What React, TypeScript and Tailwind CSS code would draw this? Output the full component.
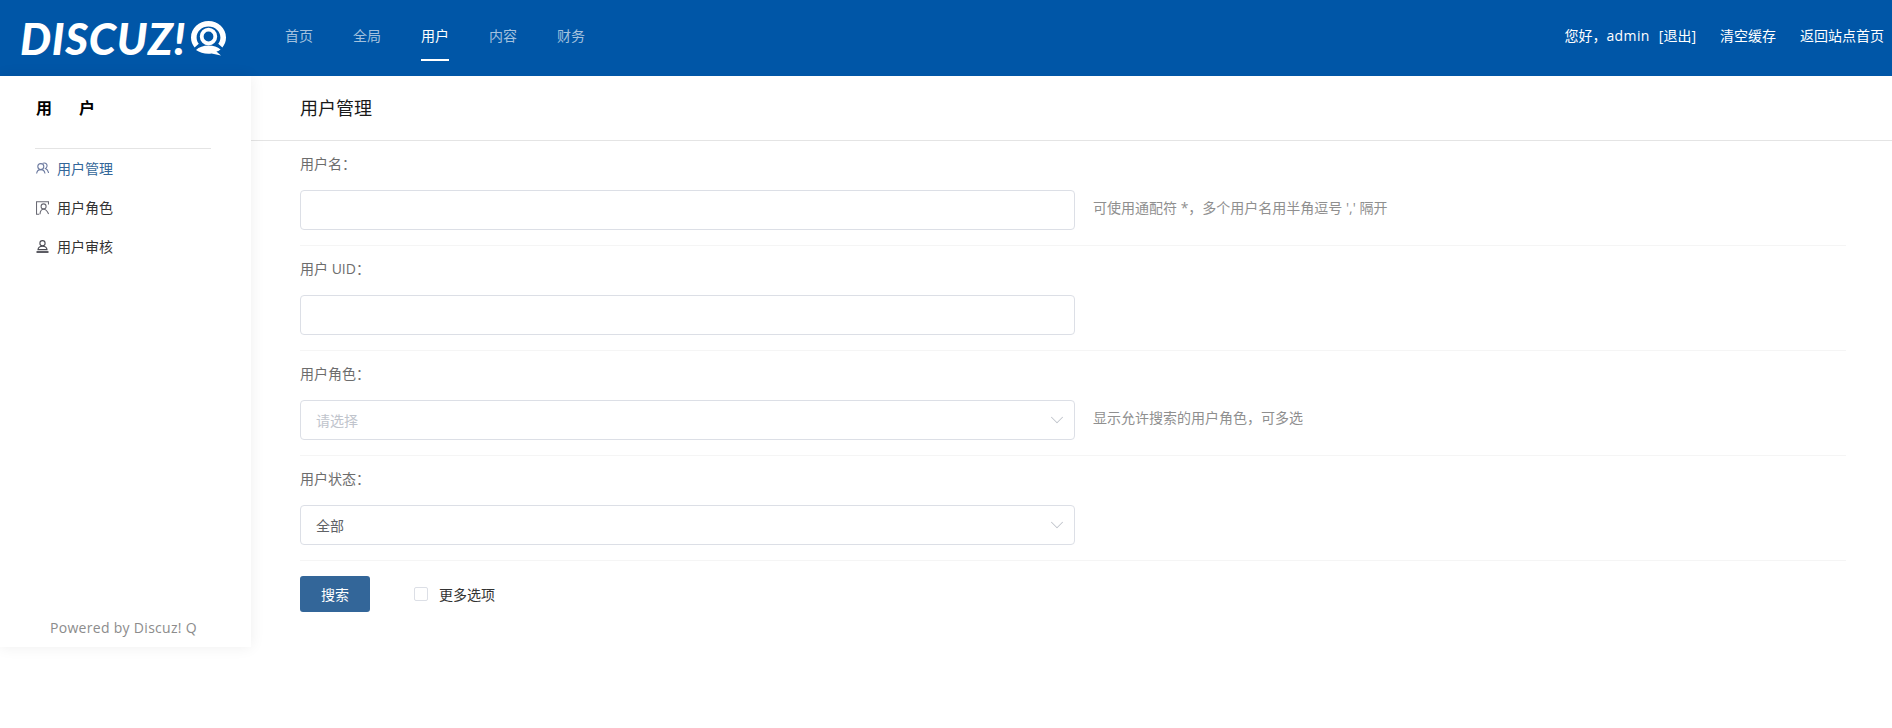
import React from 'react';
import { ChevronDown } from 'lucide-react';

const fontStack = "font-['Open_Sans','Noto_Sans_CJK_SC',sans-serif]";

const navItems = ['首页', '全局', '用户', '内容', '财务'];

const UsersIcon = () => (
  <svg width="13" height="13" viewBox="0 0 13 13" fill="none" stroke="#6d7ba0" strokeWidth="1.1">
    <circle cx="4.8" cy="4.6" r="3" />
    <path d="M0.6 11.5 C1 8.8 2.6 7.6 4.8 7.6 C7 7.6 8.6 8.8 9 11.5" />
    <path d="M6.6 1.4 C7 1.1 7.6 1 8.2 1 C10 1 11.3 2.4 11 4.2 C10.9 5.2 10.2 6 9.4 6.6 C11 7.2 12.2 8.8 12.6 11" />
  </svg>
);

const RoleIcon = () => (
  <svg width="13" height="14" viewBox="0 0 13 14" fill="none" stroke="#6a6a74" strokeWidth="1.1">
    <path d="M12.5 3.6 V0.8 H0.5 V13.2 H3.2" />
    <circle cx="7.6" cy="5.4" r="2.5" />
    <path d="M4 13.2 C4.2 10.2 5.6 8.2 7.6 8.2 C9.6 8.2 11.4 10.2 12.6 13" />
  </svg>
);

const AuditIcon = () => (
  <svg width="13" height="13" viewBox="0 0 13 13" fill="none" stroke="#4a4a52" strokeWidth="1.1">
    <circle cx="6.5" cy="3.2" r="2.6" />
    <path d="M2 9.6 C2.2 7.4 4 6.2 6.5 6.2 C9 6.2 10.8 7.4 11 9.6 Z" />
    <path d="M0.5 12 H12.5" strokeWidth="1.8" />
  </svg>
);

const QMark = () => (
  <svg width="35" height="35" viewBox="0 0 35 35" className="ml-[5px] mt-[1px]">
    <path
      fill="#fff"
      d="M17.5 0 C27 0 35 7.2 35 16.5 C35 20.6 33.6 23.8 31.4 26.4 L27.2 22.8 C28.6 21 29.4 19 29.4 16.5 C29.4 10.2 24 5.4 17.5 5.4 C11 5.4 5.6 10.2 5.6 16.5 C5.6 19 6.4 21 7.8 22.8 L3.6 26.4 C1.4 23.8 0 20.6 0 16.5 C0 7.2 8 0 17.5 0 Z"
    />
    <circle cx="17.5" cy="15.5" r="6.8" fill="none" stroke="#fff" strokeWidth="3.8" />
    <path
      fill="#fff"
      d="M5 29 C8 26 12.4 24.4 17.5 24.4 C22.4 24.4 26.6 26 29.6 28.4 C28 29.6 26.6 30.2 25.4 30.6 L30 34.6 L20.6 32.4 C19.4 32.6 18.4 32.8 17.5 32.8 C12.6 32.8 8.4 31.4 5 29 Z"
    />
  </svg>
);

const Label = ({ children }: { children: React.ReactNode }) => (
  <div className="h-[20px] text-[14px] leading-[20px] text-[#6d6d6d]">{children}</div>
);

const Hint = ({ children }: { children: React.ReactNode }) => (
  <span className="mb-[6px] ml-[18px] text-[14px] text-[#8f8f8f]">{children}</span>
);

const Row = ({ label, hint, children }: { label: string; hint?: string; children: React.ReactNode }) => (
  <div className="h-[105px] border-b border-[#f5f5f5] pt-[13px]">
    <Label>{label}</Label>
    <div className="mt-[16px] flex items-center">
      {children}
      {hint && <Hint>{hint}</Hint>}
    </div>
  </div>
);

const TextBox = () => (
  <input className="h-[40px] w-[775px] rounded-[4px] border border-[#dcdfe6] bg-white px-[15px] outline-none" />
);

const SelectBox = ({ value, muted }: { value: string; muted?: boolean }) => (
  <div className="flex h-[40px] w-[775px] items-center justify-between rounded-[4px] border border-[#dcdfe6] bg-white pl-[15px] pr-[6px]">
    <span className={`text-[14px] ${muted ? 'text-[#c0c4cc]' : 'text-[#606266]'}`}>{value}</span>
    <ChevronDown className="h-[22px] w-[22px] text-[#c0c4cc]" strokeWidth={1.1} />
  </div>
);

export default function App() {
  return (
    <div className={`flex min-h-[728px] flex-col bg-white ${fontStack}`}>
      <header className="flex h-[76px] shrink-0 items-center bg-[#0056a7] text-white">
        <div className="flex w-[285px] shrink-0 items-center pl-[20px]">
          <span className="font-['Lato',sans-serif] text-[44px] leading-none font-black tracking-[0.7px] italic">DISCUZ!</span>
          <QMark />
        </div>
        <nav className="flex h-full gap-[40px]">
          {navItems.map((item) => (
            <a
              key={item}
              className={`relative flex h-full items-center pb-[6px] text-[14px] ${
                item === '用户' ? 'text-white' : 'text-[#a3c1de]'
              }`}
            >
              {item}
              {item === '用户' && <span className="absolute bottom-[15px] left-0 h-[2px] w-full bg-white" />}
            </a>
          ))}
        </nav>
        <div className="ml-auto flex items-center gap-[24px] pr-[8px] pb-[6px] text-[14px]">
          <span>
            您好，<span className="tracking-[0.4px]">admin</span>
            <span className="ml-[9px]">[退出]</span>
          </span>
          <span>清空缓存</span>
          <span>返回站点首页</span>
        </div>
      </header>

      <div className="flex flex-1">
        <aside className="relative flex h-[571px] w-[251px] shrink-0 flex-col bg-white pl-[36px] shadow-[0_0_14px_rgba(0,0,0,0.07)]">
          <div className="mt-[20px] flex h-[24px] items-center gap-[27px] text-[16px] font-bold text-black">
            <span>用</span>
            <span>户</span>
          </div>
          <div className="mt-[28px] -ml-px h-px w-[176px] bg-[#e4e4e4]" />
          <ul className="text-[14px]">
            <li className="flex h-[39px] items-center gap-[8px] text-[#336699]">
              <UsersIcon />
              用户管理
            </li>
            <li className="flex h-[39px] items-center gap-[8px] text-[#333]">
              <RoleIcon />
              用户角色
            </li>
            <li className="flex h-[39px] items-center gap-[8px] text-[#333]">
              <AuditIcon />
              用户审核
            </li>
          </ul>
          <div className="mt-auto mb-[9px] pl-[14px] text-[14px] tracking-[0.3px] text-[#8c8c8c]">Powered by Discuz! Q</div>
        </aside>

        <main className="min-w-0 flex-1">
          <div className="flex h-[65px] items-center border-b border-[#e4e4e4] pl-[49px] text-[18px] text-[#1a1a1a]">
            用户管理
          </div>
          <div className="pl-[49px] pr-[46px]">
            <Row label="用户名：" hint="可使用通配符 *，多个用户名用半角逗号 ',' 隔开">
              <TextBox />
            </Row>
            <Row label="用户 UID：">
              <TextBox />
            </Row>
            <Row label="用户角色：" hint="显示允许搜索的用户角色，可多选">
              <SelectBox value="请选择" muted />
            </Row>
            <Row label="用户状态：">
              <SelectBox value="全部" />
            </Row>
            <div className="mt-[15px] flex items-center">
              <button className="h-[36px] w-[70px] rounded-[3px] bg-[#336699] text-[14px] text-white">搜索</button>
              <span className="ml-[44px] h-[14px] w-[14px] rounded-[2px] border border-[#dcdfe6] bg-white" />
              <span className="ml-[11px] text-[14px] text-[#333]">更多选项</span>
            </div>
          </div>
        </main>
      </div>
    </div>
  );
}
